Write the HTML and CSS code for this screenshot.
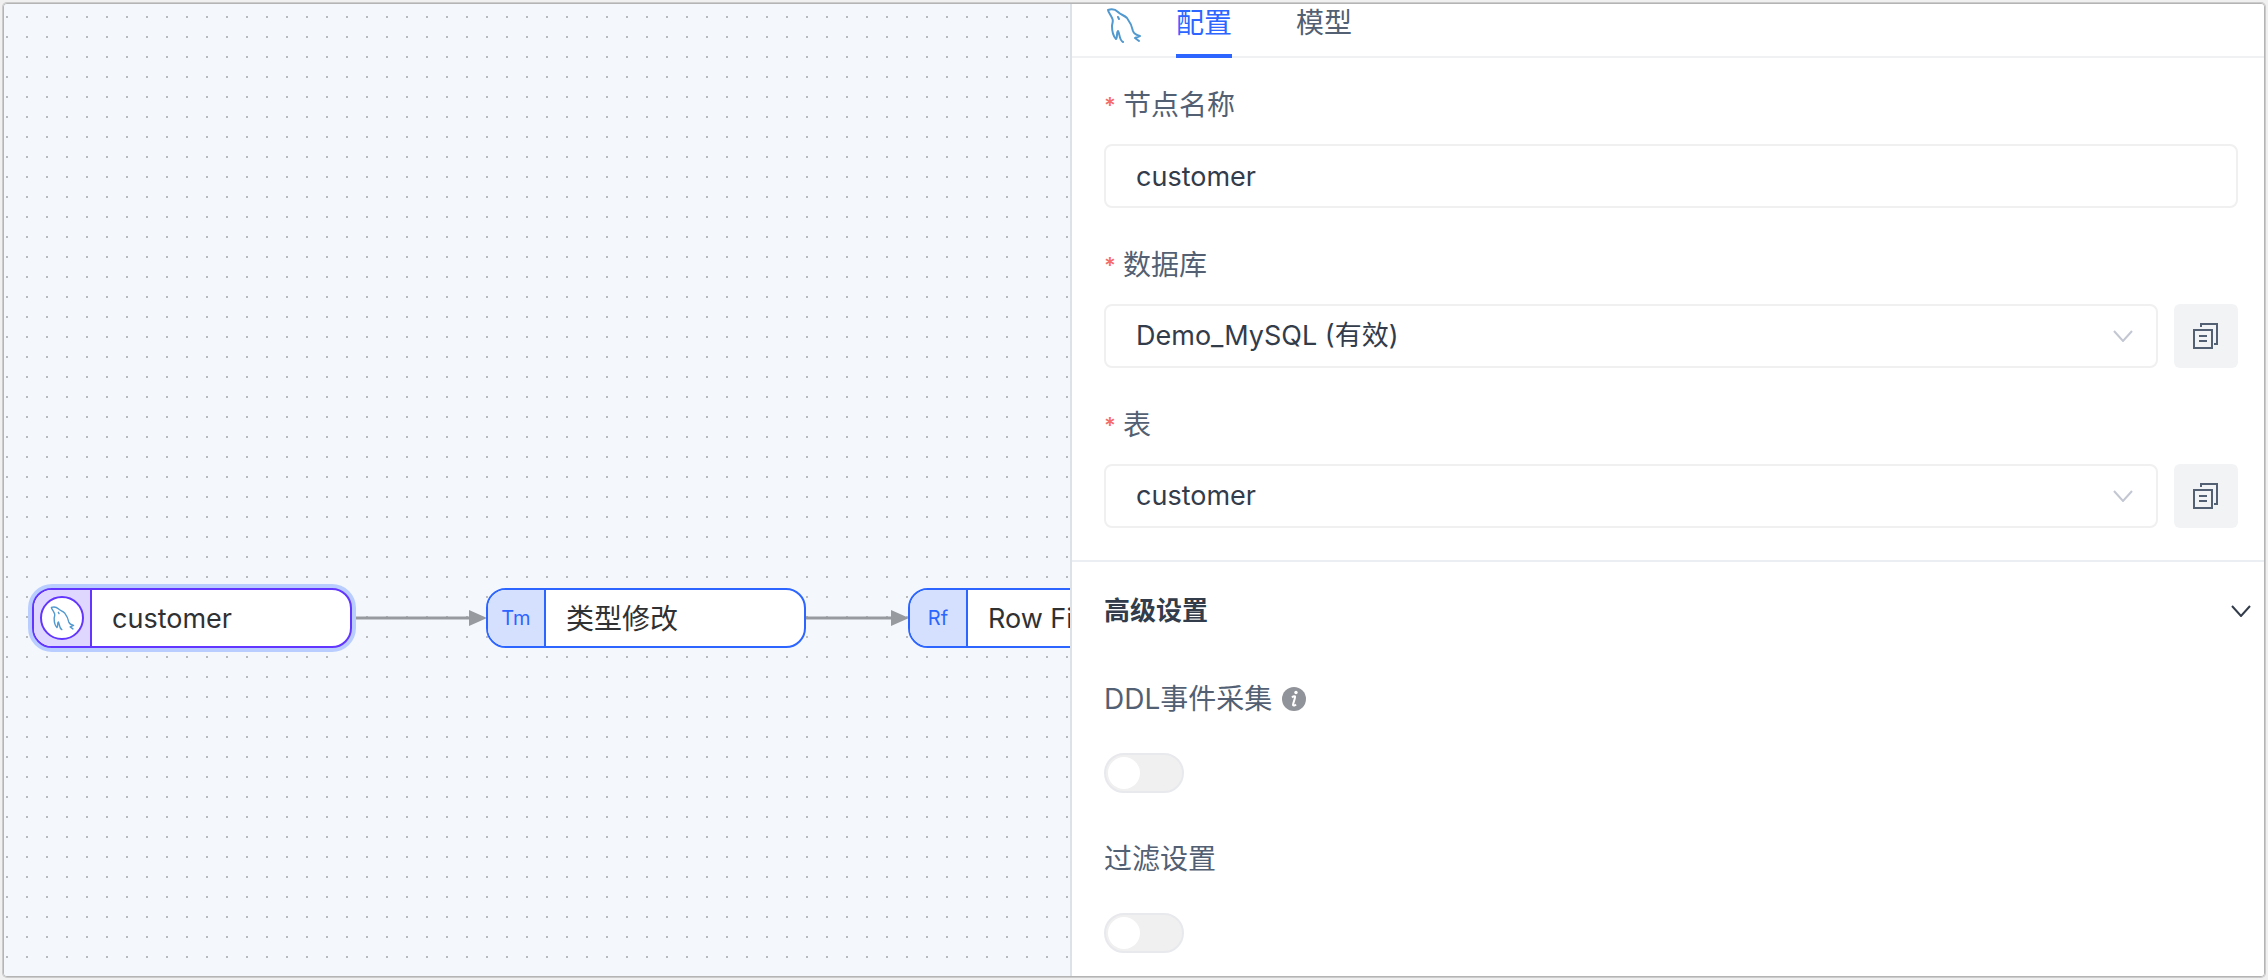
FILE: index.html
```html
<!DOCTYPE html>
<html lang="zh-CN">
<head>
<meta charset="utf-8">
<title>节点配置</title>
<link rel="stylesheet" href="styles.css">
</head>
<body>
<svg class="defs" aria-hidden="true">
  <symbol id="dolphin" viewBox="0 0 36 36">
    <path d="M33 33 29 30 34 28C30 27 28 26 27 23C26 18 24 14 21 10C18 7 15 7 12 4C9 1 5 1 2 2C2 4 5 7 6 10C8 13 6 15 6 18C6 23 7 28 10 31C12 29 10 25 12 23C14 26 13 32 17 34"/>
    <path d="M12 9 13 11"/>
  </symbol>
  <symbol id="copy" viewBox="0 0 26 26">
    <path d="M1 7H19V25H1ZM8 4V1H24V21H21M6 13H14M6 18H14"/>
  </symbol>
  <symbol id="chevron" viewBox="0 0 20 12">
    <path d="M1 1 10 11 19 1"/>
  </symbol>
</svg>
<div class="window">
  <main class="canvas">
    <svg class="edges" aria-hidden="true">
      <path class="line" d="M346 614H466M802 614H888"/>
      <path class="arrow" d="M465 606 483 614 465 622ZM887 606 905 614 887 622Z"/>
    </svg>
    <div class="node node-source">
      <span class="node-icon"><span class="badge"><svg class="dolphin-small"><use href="#dolphin"/></svg></span></span>
      <span class="node-name latin">customer</span>
    </div>
    <div class="node node-type">
      <span class="node-icon">Tm</span>
      <span class="node-name">类型修改</span>
    </div>
    <div class="node node-filter">
      <span class="node-icon">Rf</span>
      <span class="node-name latin">Row Filter</span>
    </div>
  </main>
  <aside class="panel">
    <nav class="tabs">
      <svg class="dolphin"><use href="#dolphin"/></svg>
      <button class="tab active" type="button">配置</button>
      <button class="tab" type="button">模型</button>
    </nav>
    <form>
      <section class="basic">
        <div class="field">
          <label class="label required" for="name">节点名称</label>
          <input class="control" id="name" type="text" value="customer">
        </div>
        <div class="field">
          <label class="label required" for="db">数据库</label>
          <div class="row">
            <div class="select">
              <select class="control" id="db"><option>Demo_MySQL (有效)</option></select>
              <svg class="arrow-down"><use href="#chevron"/></svg>
            </div>
            <button class="copy" type="button" aria-label="复制数据库"><svg><use href="#copy"/></svg></button>
          </div>
        </div>
        <div class="field">
          <label class="label required" for="table">表</label>
          <div class="row">
            <div class="select">
              <select class="control" id="table"><option>customer</option></select>
              <svg class="arrow-down"><use href="#chevron"/></svg>
            </div>
            <button class="copy" type="button" aria-label="复制表"><svg><use href="#copy"/></svg></button>
          </div>
        </div>
      </section>
      <button class="collapse" type="button">高级设置 <svg class="collapse-arrow"><use href="#chevron"/></svg></button>
      <section class="advanced">
        <div class="setting">
          <label class="label" for="ddl">DDL事件采集
            <svg class="info" viewBox="0 0 24 24" aria-hidden="true">
              <circle cx="12" cy="12" r="12"/>
              <path d="M10 10.5C11 9.5 12 9 13 9.5C13.5 11 11 16 11 18C11.500 19 13 18.500 14 17.500"/>
              <circle class="info-dot" cx="14" cy="5.500" r="1.700"/>
            </svg>
          </label>
          <input class="switch" id="ddl" type="checkbox" role="switch">
        </div>
        <div class="setting">
          <label class="label" for="filter">过滤设置</label>
          <input class="switch" id="filter" type="checkbox" role="switch">
        </div>
      </section>
    </form>
  </aside>
</div>
</body>
</html>
```
FILE: styles.css
```css
* { box-sizing: border-box; }

body {
  margin: 0;
  height: 100vh;
  padding: 3px;
  background: #f0f0f0;
  color: #535f72;
  font: 28px/40px Inter, "Noto Sans CJK SC", sans-serif;
}

button, input, select { font: inherit; color: inherit; margin: 0; }
button { border: 0; padding: 0; background: none; cursor: pointer; }
svg { fill: none; flex: none; }
.defs { position: absolute; width: 0; height: 0; }

.window {
  display: grid;
  grid-template-columns: 1066fr 1194fr;
  height: 100%;
  overflow: hidden;
  border: 1px solid #b4b4b4;
  border-radius: 4px;
  box-shadow: 0 0 0 1px #cbcbcb;
}

/* flow canvas */
.canvas {
  position: relative;
  overflow: hidden;
  background: #f4f8fd conic-gradient(from 270deg at 2px 2px, #b8babd 90deg, transparent 0) 2px 12px / 20px 20px;
}
.edges { position: absolute; inset: 0; width: 100%; height: 100%; }
.line { stroke: #979a9f; stroke-width: 3; }
.arrow { fill: #979a9f; }

.node {
  position: absolute;
  top: 584px;
  display: flex;
  width: 320px;
  height: 60px;
  overflow: hidden;
  border: 2px solid #2c65ff;
  border-radius: 20px;
  background: #fff;
  color: #303133;
}
.node-source { left: 28px; border-color: #6236ff; box-shadow: 0 0 0 4px #b9cdff; }
.node-type { left: 482px; }
.node-filter { left: 904px; }
.node-icon {
  display: flex;
  flex: none;
  align-items: center;
  justify-content: center;
  width: 58px;
  border-right: 2px solid #2c65ff;
  background: #d5e0ff;
  color: #2c65ff;
  font-size: 20px;
}
.node-source .node-icon { border-color: #6236ff; background: #e0d7ff; }
.badge {
  display: flex;
  align-items: center;
  justify-content: center;
  width: 44px;
  height: 44px;
  border: 2px solid #6236ff;
  border-radius: 50%;
  background: #fff;
}
.node-name { padding-left: 20px; line-height: 58px; white-space: nowrap; }
.latin, .control { font-size: 27px; }
.dolphin, .dolphin-small { stroke: #5199cf; stroke-width: 2; stroke-linejoin: round; stroke-linecap: round; }
.dolphin { width: 36px; height: 36px; margin: 4px 34px 0 0; }
.dolphin-small { width: 25px; height: 25px; }

/* settings panel */
.panel { overflow: hidden; border-left: 2px solid #dde2e8; background: #fff; }
.tabs { display: flex; height: 54px; padding-left: 34px; border-bottom: 2px solid #f0f1f3; }
.tab { height: 54px; margin-right: 64px; padding-bottom: 12px; line-height: 38px; border-bottom: 4px solid transparent; }
.tab.active { border-color: #2c65ff; color: #2c65ff; }

.basic { padding: 6px 26px 32px 32px; border-bottom: 2px solid #ebeef3; }
.field + .field { margin-top: 16px; }
.label { display: flex; align-items: center; height: 80px; padding-top: 2px; }
.required::before { content: "*"; width: 19px; color: #f56c6c; font-size: 22px; font-weight: 600; }
.control {
  display: block;
  width: 100%;
  height: 64px;
  padding: 0 30px;
  border: 2px solid #f0f0f0;
  border-radius: 8px;
  background: #fff;
  color: #333c4a;
  appearance: none;
}
.row { display: flex; gap: 16px; }
.select { display: grid; flex: 1; align-items: center; }
.select > * { grid-area: 1 / 1; }
.arrow-down {
  width: 20px;
  height: 12px;
  margin-right: 25px;
  justify-self: end;
  stroke: #c3c7d2;
  stroke-width: 2;
  pointer-events: none;
}
.copy {
  display: flex;
  align-items: center;
  justify-content: center;
  width: 64px;
  height: 64px;
  border-radius: 6px;
  background: #f2f3f5;
}
.copy svg { width: 26px; height: 26px; stroke: #535f72; stroke-width: 2; }

.collapse {
  display: flex;
  align-items: center;
  justify-content: space-between;
  width: 100%;
  height: 96px;
  padding: 2px 13px 0 32px;
  color: #333c4a;
  font-size: 26px;
  font-weight: 700;
}
.collapse-arrow { width: 20px; height: 12px; stroke: #333c4a; stroke-width: 2; }
.advanced { padding-left: 32px; }
.setting { height: 160px; }
.info { width: 24px; height: 24px; margin-left: 10px; fill: #909399; }
.info path { fill: none; stroke: #fff; stroke-width: 2; }
.info .info-dot { fill: #fff; }
.switch {
  display: flex;
  align-items: center;
  width: 80px;
  height: 40px;
  margin: 15px 0 0;
  padding: 0 2px;
  border: 2px solid #e8e9ed;
  border-radius: 20px;
  background: #f0f0f0;
  appearance: none;
}
.switch::before { content: ""; width: 32px; height: 32px; border-radius: 50%; background: #fff; }
.switch:checked { justify-content: flex-end; background: #2c65ff; }
```
